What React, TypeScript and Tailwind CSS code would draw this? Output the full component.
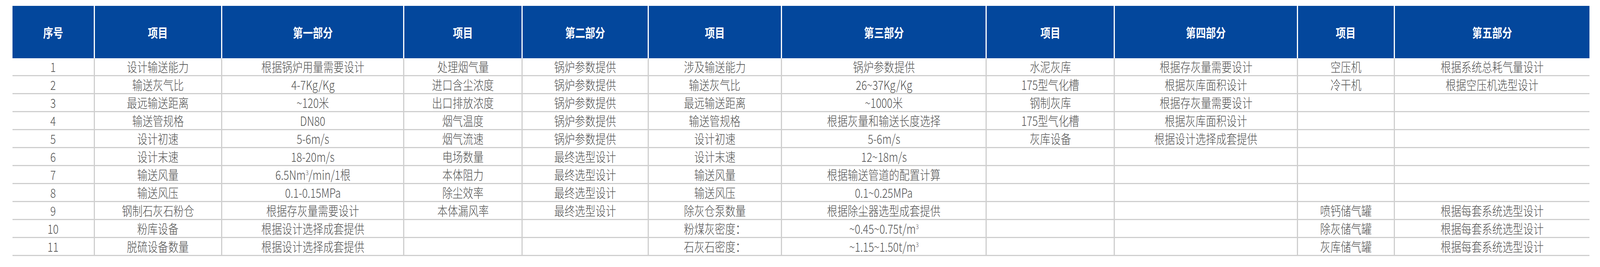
import React from "react"

const headers = ["序号", "项目", "第一部分", "项目", "第二部分", "项目", "第三部分", "项目", "第四部分", "项目", "第五部分"]

const cube = <sup className="text-[17px] -top-[12px]">3</sup>

const rows: React.ReactNode[][] = [
    ["1", "设计输送能力", "根据锅炉用量需要设计", "处理烟气量", "锅炉参数提供", "涉及输送能力", "锅炉参数提供", "水泥灰库", "根据存灰量需要设计", "空压机", "根据系统总耗气量设计"],
    ["2", "输送灰气比", "4-7Kg/Kg", "进口含尘浓度", "锅炉参数提供", "输送灰气比", "26~37Kg/Kg", "175型气化槽", "根据灰库面积设计", "冷干机", "根据空压机选型设计"],
    ["3", "最远输送距离", "~120米", "出口排放浓度", "锅炉参数提供", "最远输送距离", "~1000米", "钢制灰库", "根据存灰量需要设计", "", ""],
    ["4", "输送管规格", "DN80", "烟气温度", "锅炉参数提供", "输送管规格", "根据灰量和输送长度选择", "175型气化槽", "根据灰库面积设计", "", ""],
    ["5", "设计初速", "5-6m/s", "烟气流速", "锅炉参数提供", "设计初速", "5-6m/s", "灰库设备", "根据设计选择成套提供", "", ""],
    ["6", "设计末速", "18-20m/s", "电场数量", "最终选型设计", "设计末速", "12~18m/s", "", "", "", ""],
    ["7", "输送风量", <>6.5Nm{cube}/min/1根</>, "本体阻力", "最终选型设计", "输送风量", "根据输送管道的配置计算", "", "", "", ""],
    ["8", "输送风压", "0.1-0.15MPa", "除尘效率", "最终选型设计", "输送风压", "0.1~0.25MPa", "", "", "", ""],
    ["9", "钢制石灰石粉仓", "根据存灰量需要设计", "本体漏风率", "最终选型设计", "除灰仓泵数量", "根据除尘器选型成套提供", "", "", "喷钙储气罐", "根据每套系统选型设计"],
    ["10", "粉库设备", "根据设计选择成套提供", "", "", "粉煤灰密度：", <>~0.45~0.75t/m{cube}</>, "", "", "除灰储气罐", "根据每套系统选型设计"],
    ["11", "脱硫设备数量", "根据设计选择成套提供", "", "", "石灰石密度：", <>~1.15~1.50t/m{cube}</>, "", "", "灰库储气罐", "根据每套系统选型设计"],
]

export default function App() {
    return (
        <div className="w-full bg-white pt-[15px] font-['Noto_Sans_CJK_SC',sans-serif]">
            <div className="ml-[0.78%] grid w-[98.56%] grid-cols-[260fr_409fr_584fr_379fr_404fr_428fr_656fr_411fr_587fr_310fr_628fr]">
                {headers.map((h, i) => (
                    <div
                        key={"h" + i}
                        className={
                            i === 0
                                ? "flex h-[134px] items-center justify-center bg-[#03479c] text-[32px] font-bold text-white"
                                : "flex h-[134px] items-center justify-center border-l-[3px] border-white bg-[#03479c] text-[32px] font-bold text-white"
                        }
                    >
                        <span className="scale-x-[0.8] whitespace-nowrap">{h}</span>
                    </div>
                ))}

                {rows.map((r, ri) =>
                    r.map((c, ci) => (
                        <div
                            key={ri + "-" + ci}
                            className={
                                ci === 0
                                    ? "flex h-[46px] items-center justify-center border-b-[3px] border-[#cfcfcf] text-[33px] leading-none font-light text-[#525252]"
                                    : "flex h-[46px] items-center justify-center border-b-[3px] border-l-[3px] border-[#cfcfcf] text-[33px] leading-none font-light text-[#525252]"
                            }
                        >
                            <span className="scale-x-[0.8] whitespace-nowrap">{c}</span>
                        </div>
                    ))
                )}
            </div>
        </div>
    )
}
